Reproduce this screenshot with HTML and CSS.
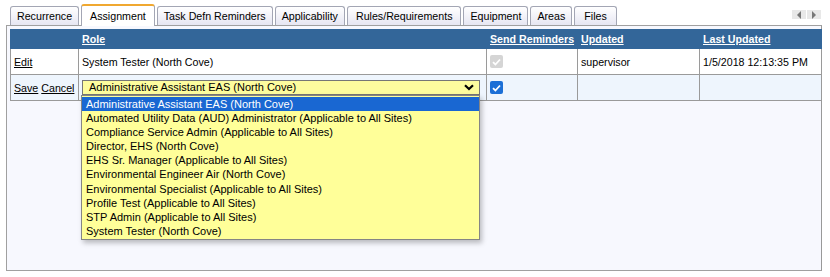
FILE: index.html
```html
<!DOCTYPE html>
<html>
<head>
<meta charset="utf-8">
<link rel="stylesheet" href="styles.css">
</head>
<body>
<div class="wrap">
  <div class="tabbar">
    <div class="tabs">
      <div class="tab">Recurrence</div>
      <div class="tab active">Assignment</div>
      <div class="tab">Task Defn Reminders</div>
      <div class="tab">Applicability</div>
      <div class="tab wide">Rules/Requirements</div>
      <div class="tab">Equipment</div>
      <div class="tab">Areas</div>
      <div class="tab files">Files</div>
    </div>
    <div class="scrollers">
      <span class="sbtn"><svg width="6" height="8" viewBox="0 0 6 8"><path d="M5 0 L1 4 L5 8 Z" fill="#777"/></svg></span>
      <span class="sbtn"><svg width="6" height="8" viewBox="0 0 6 8"><path d="M1 0 L5 4 L1 8 Z" fill="#777"/></svg></span>
    </div>
  </div>
  <div class="panel">
    <table class="grid">
      <colgroup>
        <col class="c1"><col class="c2"><col class="c3"><col class="c4"><col class="c5">
      </colgroup>
      <thead>
        <tr>
          <th></th>
          <th><a>Role</a></th>
          <th><a>Send Reminders</a></th>
          <th><a>Updated</a></th>
          <th><a>Last Updated</a></th>
        </tr>
      </thead>
      <tbody>
        <tr class="r1">
          <td><a class="lnk">Edit</a></td>
          <td>System Tester (North Cove)</td>
          <td><span class="cb disabled"><svg width="9" height="8" viewBox="0 0 9 8"><path d="M1 4.2 L3.4 6.5 L8 1.5" fill="none" stroke="#fff" stroke-width="1.8"/></svg></span></td>
          <td>supervisor</td>
          <td>1/5/2018 12:13:35 PM</td>
        </tr>
        <tr class="r2">
          <td><a class="lnk">Save</a> <a class="lnk">Cancel</a></td>
          <td class="selcell">
            <div class="select">
              <span>Administrative Assistant EAS (North Cove)</span>
              <svg class="chev" width="10" height="7" viewBox="0 0 10 7"><path d="M1 1.2 L5 5 L9 1.2" fill="none" stroke="#000" stroke-width="2.2"/></svg>
            </div>
            <ul class="list">
              <li class="hl">Administrative Assistant EAS (North Cove)</li>
              <li>Automated Utility Data (AUD) Administrator (Applicable to All Sites)</li>
              <li>Compliance Service Admin (Applicable to All Sites)</li>
              <li>Director, EHS (North Cove)</li>
              <li>EHS Sr. Manager (Applicable to All Sites)</li>
              <li>Environmental Engineer Air (North Cove)</li>
              <li>Environmental Specialist (Applicable to All Sites)</li>
              <li>Profile Test (Applicable to All Sites)</li>
              <li>STP Admin (Applicable to All Sites)</li>
              <li>System Tester (North Cove)</li>
            </ul>
          </td>
          <td><span class="cb on"><svg width="9" height="8" viewBox="0 0 9 8"><path d="M1 4.2 L3.4 6.5 L8 1.5" fill="none" stroke="#fff" stroke-width="1.8"/></svg></span></td>
          <td></td>
          <td></td>
        </tr>
      </tbody>
    </table>
  </div>
</div>
</body>
</html>
```

FILE: styles.css
```css
* { box-sizing: border-box; }
html, body { margin: 0; padding: 0; background: #fff; }
body { font-family: "Liberation Sans", Arial, sans-serif; font-size: 10.67px; color: #000; }

.wrap { padding: 4px 8px 0 6px; width: 830px; }

.tabbar { display: flex; align-items: flex-end; justify-content: space-between; height: 21px; padding-left: 4px; }
.tabs { display: flex; align-items: flex-end; gap: 2px; }
.tab {
  height: 19px;
  padding: 0 6px;
  line-height: 18px;
  border: 1px solid #a3a6b4;
  border-bottom: none;
  border-radius: 3px 3px 0 0;
  background: linear-gradient(#ffffff, #e6e6f2);
  white-space: nowrap;
}
.tab.wide { padding: 0 8px; }
.tab.files { padding: 0 9px; }
.tab.active {
  height: 22px;
  margin-bottom: -1px;
  padding: 0 8px;
  line-height: 20px;
  background: #fff;
  border-top: 2px solid #f0a830;
  position: relative;
}
.scrollers { display: flex; gap: 1px; align-self: flex-start; margin-top: 6px; margin-right: 1px; }
.sbtn {
  width: 14px; height: 9px;
  display: flex; align-items: center; justify-content: center;
  background: #e8e8e8;
}

.panel {
  height: 246px;
  border: 1px solid #a0a0a0;
  border-right-color: #999;
  background: #f7f8fe;
  padding: 3px 0 0 3px;
}

.grid { border-collapse: collapse; width: 811px; table-layout: fixed; }
.c1 { width: 68px; } .c2 { width: 408px; } .c3 { width: 91px; } .c4 { width: 122px; } .c5 { width: 122px; }
.grid th {
  background: #336699;
  color: #fff;
  font-weight: bold;
  text-align: left;
  height: 19px;
  padding: 0 2px 0 3px;
  border: 1px solid #336699;
  border-left-color: #9a9a9a;
  white-space: nowrap;
  overflow: hidden;
}
.grid th:first-child { border-left-color: #336699; }
.grid th a { text-decoration: underline; }
.grid td {
  height: 26px;
  padding: 0 3px;
  border: 1px solid #9a9a9a;
  vertical-align: middle;
  white-space: nowrap;
}
.r1 td { background: #fff; }
.r2 td { background: #eef5fd; }
.lnk { color: #000; text-decoration: underline; }

.cb {
  display: inline-flex; align-items: center; justify-content: center;
  width: 13px; height: 13px; border-radius: 2px; vertical-align: middle;
}
.cb.disabled { background: #d5d5d5; }
.cb.on { background: #1b6fd6; }

.selcell { position: relative; }
.select {
  display: flex; align-items: center; justify-content: space-between;
  height: 15px; width: 398px;
  border: 1px solid #767676;
  background: #fdfc9e;
  padding: 0 5px 0 6px;
  font-size: 11px;
  line-height: 13px;
}
.chev { flex: none; }
.list {
  position: absolute;
  left: 2px; top: 20px;
  width: 399px;
  margin: 0; padding: 1px 0 1px;
  list-style: none;
  background: #ffff99;
  border: 1px solid #858585;
  box-shadow: 2px 3px 5px rgba(0,0,0,0.25);
  font-size: 11px;
  z-index: 5;
}
.list li { height: 14.1px; line-height: 14px; padding-left: 4px; }
.list li.hl { background: #1967d2; color: #fff; }
```
